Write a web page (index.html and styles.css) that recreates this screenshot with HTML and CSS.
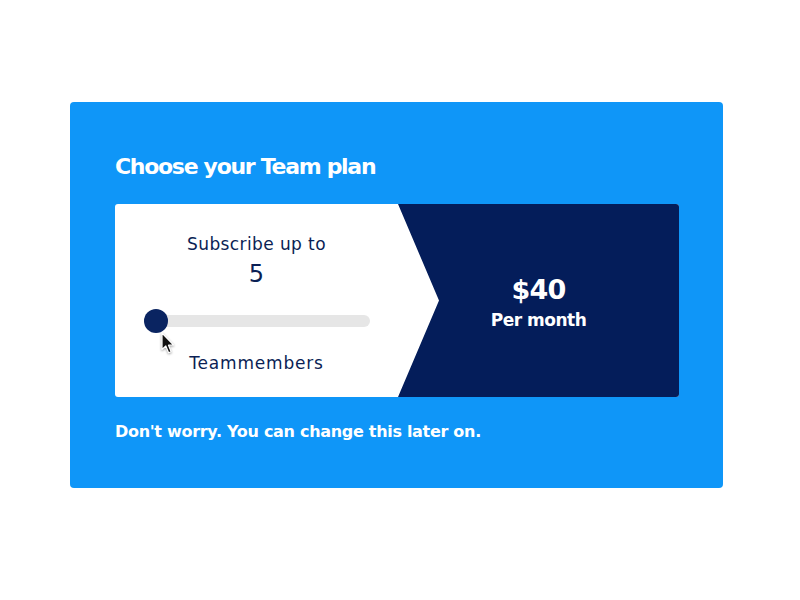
FILE: index.html
```html
<!DOCTYPE html>
<html>
<head>
<meta charset="utf-8">
<link rel="stylesheet" href="styles.css">
</head>
<body>
<div class="card">
  <h1 class="title">Choose your Team plan</h1>
  <div class="plan">
    <div class="left">
      <div class="sub">Subscribe up to</div>
      <div class="count">5</div>
      <div class="slider">
        <div class="track"></div>
        <div class="knob"></div>
        <svg class="cursor" width="14" height="23" viewBox="0 0 14 23"><path d="M1 1 L1 17.5 L4.8 14 L7.6 20.8 L10.2 19.7 L7.5 13.2 L12.6 13 Z" fill="#111" stroke="#fff" stroke-width="1.2" stroke-linejoin="round"/></svg>
      </div>
      <div class="members">Teammembers</div>
    </div>
    <div class="right">
      <div class="price">$40</div>
      <div class="per">Per month</div>
    </div>
  </div>
  <p class="note">Don't worry. You can change this later on.</p>
</div>
</body>
</html>
```
FILE: styles.css
```css
html, body { margin: 0; padding: 0; background: #fff; }
body { font-family: "DejaVu Sans", "Open Sans", sans-serif; }
.card {
  margin: 102px 0 0 70px;
  width: 653px;
  height: 386px;
  box-sizing: border-box;
  background: #0f96f8;
  border-radius: 4px;
  padding: 50px 45px 0 45px;
}
.title {
  margin: 0;
  color: #fff;
  font-size: 22px;
  font-weight: 700;
  line-height: 30px;
  letter-spacing: -1.3px;
}
.plan {
  margin-top: 22px;
  display: flex;
  height: 193px;
  width: 564px;
  background: #fff;
  border-radius: 3px;
  overflow: hidden;
}
.left {
  width: 283px;
  display: flex;
  flex-direction: column;
  align-items: center;
  color: #0b1f55;
}
.sub { margin-top: 29px; font-size: 17px; line-height: 22px; letter-spacing: 0.4px; }
.count { font-size: 24px; line-height: 28px; margin-top: 5px; }
.slider {
  position: relative;
  width: 226px;
  height: 24px;
  margin-top: 21px;
  display: flex;
  align-items: center;
}
.track {
  width: 214px;
  height: 12px;
  margin-left: 12px;
  background: #e6e6e6;
  border-radius: 6px;
}
.knob {
  position: absolute;
  left: 0;
  top: 0;
  width: 24px;
  height: 24px;
  border-radius: 50%;
  background: #0a2461;
}
.cursor { position: absolute; left: 17px; top: 23px; filter: drop-shadow(0 1px 1px rgba(0,0,0,0.35)); }
.members { margin-top: 19px; font-size: 17px; line-height: 22px; letter-spacing: 0.8px; }
.right {
  flex: 1;
  background: #041d5a;
  clip-path: polygon(0 0, 100% 0, 100% 100%, 0 100%, 41px 50%);
  display: flex;
  flex-direction: column;
  align-items: center;
  justify-content: center;
  color: #fff;
  padding-top: 4px;
}
.price { font-size: 27px; font-weight: 700; line-height: 32px; letter-spacing: -0.8px; }
.per { font-size: 17px; font-weight: 700; line-height: 24px; letter-spacing: -0.5px; margin-top: 2px; }
.note {
  margin: 24px 0 0 0;
  color: #fff;
  font-size: 16px;
  font-weight: 700;
  line-height: 22px;
  letter-spacing: -0.3px;
}
```
